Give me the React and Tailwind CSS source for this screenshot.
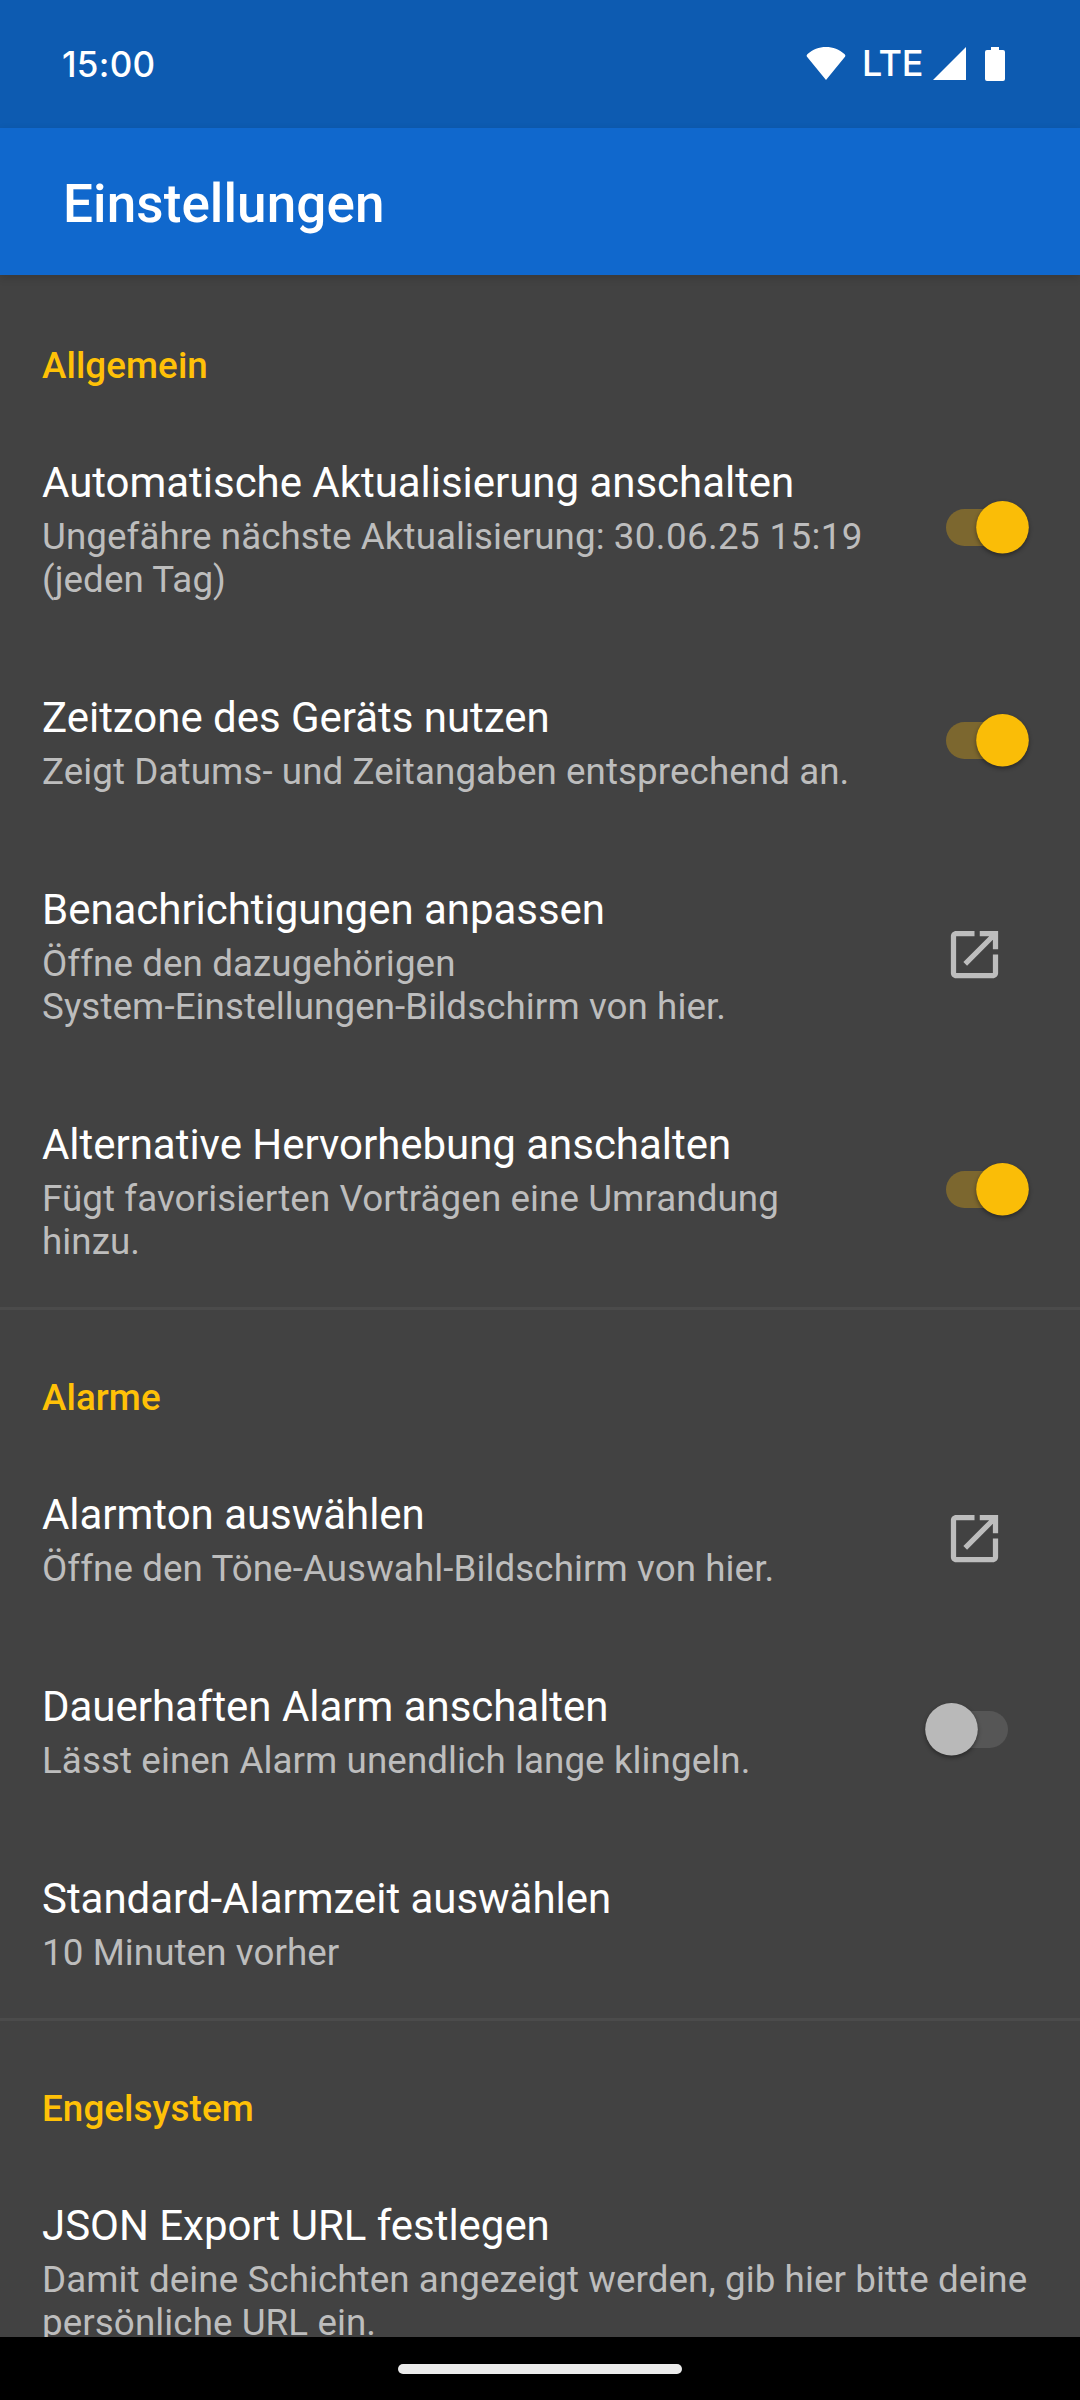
import React from "react";

function Switch({ on }) {
  return (
    <svg width="126" height="84" viewBox="0 0 126 84" className="mr-[40px] block shrink-0">
      <rect x="32" y="23" width="62" height="37" rx="18.5" fill={on ? "#7c672f" : "#565656"} />
      <circle
        cx={on ? 88.5 : 37.5}
        cy="41.3"
        r="26.3"
        fill={on ? "#fabd07" : "#b9b9b9"}
        className="drop-shadow-[0_2px_2px_rgba(0,0,0,0.4)]"
      />
    </svg>
  );
}

function OpenIcon() {
  return (
    <svg width="63" height="63" viewBox="0 0 24 24" fill="#bdbdbd" className="mr-[74px] block shrink-0">
      <path d="M19 19H5V5h7V3H5c-1.11 0-2 .9-2 2v14c0 1.1.89 2 2 2h14c1.1 0 2-.9 2-2v-7h-2v7zM14 3v2h3.59l-9.83 9.83 1.41 1.41L19 6.41V10h2V3h-7z" />
    </svg>
  );
}

function Row({ title, lines, children }) {
  return (
    <div className="flex shrink-0 items-center">
      <div className="grow pt-[45px] pb-[44px] pl-[42px]">
        <div className="h-[60px] text-[42px] leading-[56px] tracking-[-0.03px] whitespace-nowrap text-white">{title}</div>
        {lines.map((l, i) => (
          <div key={i} className="h-[43px] text-[36.75px] leading-[43px] tracking-[0.08px] whitespace-nowrap text-[#bdbdbd]">
            {l}
          </div>
        ))}
      </div>
      {children}
    </div>
  );
}

function Section({ title, children, last }) {
  return (
    <section className="relative shrink-0">
      <h2 className="h-[135px] pt-[69px] pl-[42px] text-[36.75px] leading-[44px] font-medium tracking-[0.08px] text-[#ffc107]">
        {title}
      </h2>
      {children}
      {!last && <div className="absolute -bottom-[3px] left-0 h-[3px] w-full bg-[#4b4b4b]" />}
    </section>
  );
}

export default function App() {
  return (
    <div className="flex h-[2400px] w-[1080px] flex-col overflow-hidden bg-[#424242] font-['Roboto',sans-serif]">
      <div className="flex h-[128px] shrink-0 items-start justify-between bg-[#0d5bb1] font-['Inter',sans-serif] text-white">
        <span className="pt-[42px] pl-[62px] text-[35px] leading-[44px] font-medium tracking-[0.3px]">15:00</span>
        <div className="flex pt-[46px] pr-[75px]">
          <svg width="40" height="36" viewBox="0 0 40 36" fill="#fff">
            <path d="M20 34 1.200 11C.3 9.800.6 8.800 1.600 8 6.700 3.500 13 1 20 1s13.300 2.500 18.400 7c1 .8 1.300 1.800.4 3z" />
          </svg>
          <span className="mt-[-5px] ml-[16px] w-[62px] text-[36px] leading-[44px] font-medium tracking-[-0.4px]">LTE</span>
          <svg width="34" height="36" viewBox="0 0 34 36" fill="#fff" className="ml-[9px]">
            <path d="M0 34 33 1v33z" />
          </svg>
          <svg width="20" height="36" viewBox="0 0 20 36" fill="#fff" className="ml-[18px]">
            <path d="M6 1h8v3h4a2 2 0 0 1 2 2v27a2 2 0 0 1-2 2H2a2 2 0 0 1-2-2V6a2 2 0 0 1 2-2h4z" />
          </svg>
        </div>
      </div>
      <header className="z-10 flex h-[147px] shrink-0 items-center bg-[#1068cd] pl-[63px] shadow-[0_3px_8px_rgba(0,0,0,0.15)]">
        <h1 className="pt-[4px] text-[53px] leading-[62px] font-medium tracking-[0.1px] text-white">Einstellungen</h1>
      </header>
      <main className="flex h-[2062px] shrink-0 flex-col overflow-hidden">
        <Section title="Allgemein">
          <Row
            title="Automatische Aktualisierung anschalten"
            lines={[
              <>
                Ungefähre nächste Aktualisierung: <span className="tracking-[0.35px]">30.06.25 15:19</span>
              </>,
              "(jeden Tag)",
            ]}
          >
            <Switch on />
          </Row>
          <Row title="Zeitzone des Geräts nutzen" lines={["Zeigt Datums- und Zeitangaben entsprechend an."]}>
            <Switch on />
          </Row>
          <Row title="Benachrichtigungen anpassen" lines={["Öffne den dazugehörigen", "System-Einstellungen-Bildschirm von hier."]}>
            <OpenIcon />
          </Row>
          <Row title="Alternative Hervorhebung anschalten" lines={["Fügt favorisierten Vorträgen eine Umrandung", "hinzu."]}>
            <Switch on />
          </Row>
        </Section>
        <Section title="Alarme">
          <Row title="Alarmton auswählen" lines={["Öffne den Töne-Auswahl-Bildschirm von hier."]}>
            <OpenIcon />
          </Row>
          <Row title="Dauerhaften Alarm anschalten" lines={["Lässt einen Alarm unendlich lange klingeln."]}>
            <Switch />
          </Row>
          <Row title="Standard-Alarmzeit auswählen" lines={["10 Minuten vorher"]} />
        </Section>
        <Section title="Engelsystem" last>
          <Row title="JSON Export URL festlegen" lines={["Damit deine Schichten angezeigt werden, gib hier bitte deine", "persönliche URL ein."]} />
        </Section>
      </main>
      <div className="flex h-[63px] shrink-0 justify-center bg-black pt-[27px]">
        <div className="h-[10px] w-[284px] rounded-full bg-[#ebebeb]" />
      </div>
    </div>
  );
}
